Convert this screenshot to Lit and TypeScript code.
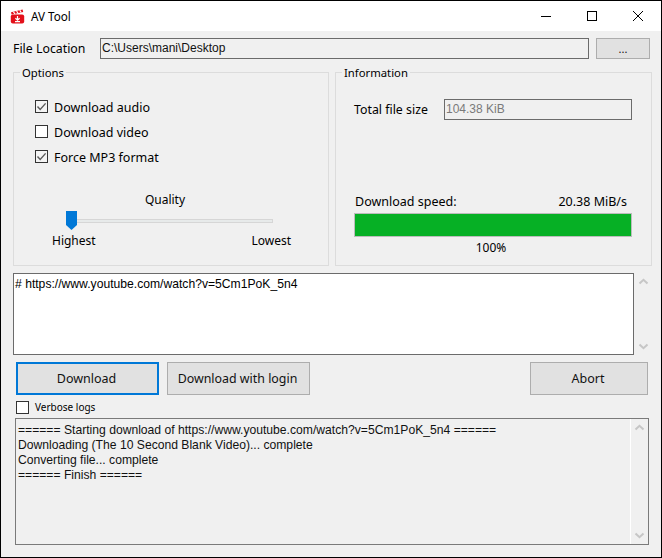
import { LitElement, html, css, svg } from "lit";
import { customElement } from "lit/decorators.js";

const check = svg`<svg class="tick" viewBox="0 0 13 13" width="13" height="13"><path d="M2.5 6.5 L5.2 9.4 L10.6 3.4" fill="none" stroke="#5a5a5a" stroke-width="1.4"/></svg>`;
const chevUp = html`<svg width="11" height="7" viewBox="0 0 11 7"><path d="M1.5 5.5 L5.5 1.8 L9.5 5.5" fill="none" stroke="#c6c6c6" stroke-width="2"/></svg>`;
const chevDown = html`<svg width="11" height="7" viewBox="0 0 11 7"><path d="M1.5 1.5 L5.5 5.2 L9.5 1.5" fill="none" stroke="#c6c6c6" stroke-width="2"/></svg>`;

@customElement("app-root")
export class AppRoot extends LitElement {
  static styles = css`
    :host { display: block; width: 662px; height: 558px; }
    * { box-sizing: border-box; }
    .window {
      width: 662px; height: 558px; border: 1px solid #000; background: #f0f0f0;
      display: flex; flex-direction: column; color: #000;
      font-family: "Noto Sans", sans-serif; font-size: 12.35px; line-height: 16px;
    }
    .sans { font-family: "Liberation Sans", Arial, sans-serif; }
    .title { height: 30px; background: #fff; display: flex; align-items: center; flex: none; }
    .app-icon { margin-left: 9px; flex: none; }
    .title-text { margin-left: 6px; font-size: 11.7px; }
    .controls { margin-left: auto; display: flex; }
    .ctl { width: 46px; height: 30px; display: flex; align-items: center; justify-content: center; }
    .content { flex: 1; display: flex; flex-direction: column; padding: 0 9px 0 12px; }
    .file-row { display: flex; align-items: center; margin-top: 7px; height: 21px; }
    .file-label { width: 87px; }
    .field {
      border: 1px solid #6b6b6b; height: 100%; font-size: 12px; display: flex; align-items: center;
      padding-left: 1px; padding-bottom: 1px; color: #111;
    }
    .path { width: 489px; }
    .btn {
      background: #e1e1e1; border: 1px solid #adadad; display: flex; align-items: center; justify-content: center;
      color: #111; padding-right: 2px; font-size: 12.5px;
    }
    .browse { width: 54px; height: 21px; margin-left: 7px; font-size: 11px; padding-right: 0; }
    .groups { display: grid; grid-template-columns: 316px 317px; column-gap: 6px; margin-top: 13px; height: 194px; }
    .group { border: 1px solid #dcdcdc; position: relative; display: flex; flex-direction: column; }
    .legend { position: absolute; left: 6px; top: -8px; padding: 0 2px; background: #f0f0f0; font-size: 11.3px; }
    .options { padding: 21px 0 0 21px; }
    .cb-row { display: flex; align-items: center; height: 25px; gap: 6px; font-size: 12.5px; }
    .cb-text { padding-top: 2px; }
    .box { width: 13px; height: 13px; border: 1px solid #333; background: #f4f4f4; flex: none; position: relative; }
    .box.white { background: #fff; }
    .tick { position: absolute; left: -1px; top: -1px; }
    .quality { width: 226px; margin: 23px 0 0 17px; text-align: center; font-size: 12px; }
    .slider { margin: 3px 0 0 31px; width: 207px; height: 20px; position: relative; display: flex; align-items: center; }
    .track { margin-left: 6px; width: 201px; height: 4px; background: #e7eaea; border: 1px solid #d6d6d6; }
    .thumb { position: absolute; left: 0; top: 0; }
    .ends { display: flex; justify-content: space-between; width: 239px; margin: 2px 0 0 17px; font-size: 12px; }
    .info { padding: 26px 19px 0 18px; }
    .size-row { display: flex; align-items: center; height: 21px; }
    .size-label { width: 90px; }
    .size { flex: 1; color: #7a7a7a; padding-left: 1px; }
    .speed { display: flex; justify-content: space-between; padding: 0 5px 0 1px; margin-top: 74px; font-size: 12.5px; }
    .bar { height: 24px; margin-top: 3px; background: #06b025; border: 1px solid #bcbcbc; }
    .pct { text-align: center; padding-right: 4px; margin-top: 3px; font-size: 12px; }
    .url-row { display: flex; margin-top: 7px; height: 82px; flex: none; }
    .url { width: 621px; background: #fff; border: 1px solid #6b6b6b; padding: 3px 1px; font-size: 12.15px; line-height: 15px; }
    .sb { display: flex; flex-direction: column; justify-content: space-between; align-items: center; padding: 5px 0; }
    .url-sb { width: 18px; }
    .actions { display: flex; margin: 7px 4px 0 3px; height: 33px; }
    .action { width: 143px; }
    .action + .action { margin-left: 8px; font-size: 12.4px; }
    .primary { border: 2px solid #0078d7; }
    .abort { width: 118px; margin-left: auto; }
    .verbose { display: flex; align-items: center; gap: 6px; margin: 5px 0 0 3px; height: 14px; font-size: 10px; }
    .log {
      margin: 4px 3px 0 2px; height: 127px; border: 1px solid #7a7a7a; display: flex; font-size: 12.15px; line-height: 15px;
    }
    .log-text { flex: 1; padding: 4px 2px; white-space: pre; color: #111; }
    .log-sb { width: 18px; border-left: 1px solid #fff; padding: 5px 0 5px; }
  `;

  render() {
    return html`
      <div class="window">
        <div class="title">
          <svg class="app-icon" width="15" height="15" viewBox="0 0 15 15">
            <path d="M1 3.2 L12.6 0.6 L13.2 3 L1.6 5.6 Z" fill="#e3101a"/>
            <path d="M3.4 2.7 L4.8 4.9 M6.6 2 L8 4.2 M9.8 1.3 L11.2 3.5" stroke="#fff" stroke-width="1.2"/>
            <rect x="0.8" y="5.4" width="13.4" height="9.2" rx="2" fill="#e3101a"/>
            <path d="M7.5 7 V10.5 M5.4 9.2 L7.5 11.2 L9.6 9.2 M5 12.6 H10" fill="none" stroke="#fff" stroke-width="1.2"/>
          </svg>
          <span class="title-text">AV Tool</span>
          <div class="controls">
            <div class="ctl"><svg width="10" height="10" viewBox="0 0 10 10"><path d="M0 5.5 H10" stroke="#000"/></svg></div>
            <div class="ctl"><svg width="10" height="10" viewBox="0 0 10 10"><rect x="0.5" y="0.5" width="9" height="9" fill="none" stroke="#000"/></svg></div>
            <div class="ctl"><svg width="10" height="10" viewBox="0 0 10 10"><path d="M0 0 L10 10 M10 0 L0 10" stroke="#000"/></svg></div>
          </div>
        </div>
        <div class="content">
          <div class="file-row">
            <span class="file-label">File Location</span>
            <div class="field path sans">C:\\Users\\mani\\Desktop</div>
            <div class="btn browse">...</div>
          </div>
          <div class="groups">
            <div class="group options">
              <span class="legend">Options</span>
              <label class="cb-row"><span class="box">${check}</span><span class="cb-text">Download audio</span></label>
              <label class="cb-row"><span class="box white"></span><span class="cb-text">Download video</span></label>
              <label class="cb-row"><span class="box">${check}</span><span class="cb-text">Force MP3 format</span></label>
              <div class="quality">Quality</div>
              <div class="slider">
                <div class="track"></div>
                <svg class="thumb" width="12" height="20" viewBox="0 0 12 20"><path d="M0 0 H11 V14 L5.5 19 L0 14 Z" fill="#0078d7"/></svg>
              </div>
              <div class="ends"><span>Highest</span><span>Lowest</span></div>
            </div>
            <div class="group info">
              <span class="legend">Information</span>
              <div class="size-row">
                <span class="size-label">Total file size</span>
                <div class="field size sans">104.38 KiB</div>
              </div>
              <div class="speed"><span>Download speed:</span><span>20.38 MiB/s</span></div>
              <div class="bar"></div>
              <div class="pct">100%</div>
            </div>
          </div>
          <div class="url-row">
            <div class="url sans"># https://www.youtube.com/watch?v=5Cm1PoK_5n4</div>
            <div class="sb url-sb">${chevUp}${chevDown}</div>
          </div>
          <div class="actions">
            <div class="btn action primary">Download</div>
            <div class="btn action">Download with login</div>
            <div class="btn abort">Abort</div>
          </div>
          <label class="verbose"><span class="box white"></span>Verbose logs</label>
          <div class="log sans">
            <div class="log-text">====== Starting download of https://www.youtube.com/watch?v=5Cm1PoK_5n4 ======
Downloading (The 10 Second Blank Video)... complete
Converting file... complete
====== Finish ======</div>
            <div class="sb log-sb">${chevUp}${chevDown}</div>
          </div>
        </div>
      </div>
    `;
  }
}
